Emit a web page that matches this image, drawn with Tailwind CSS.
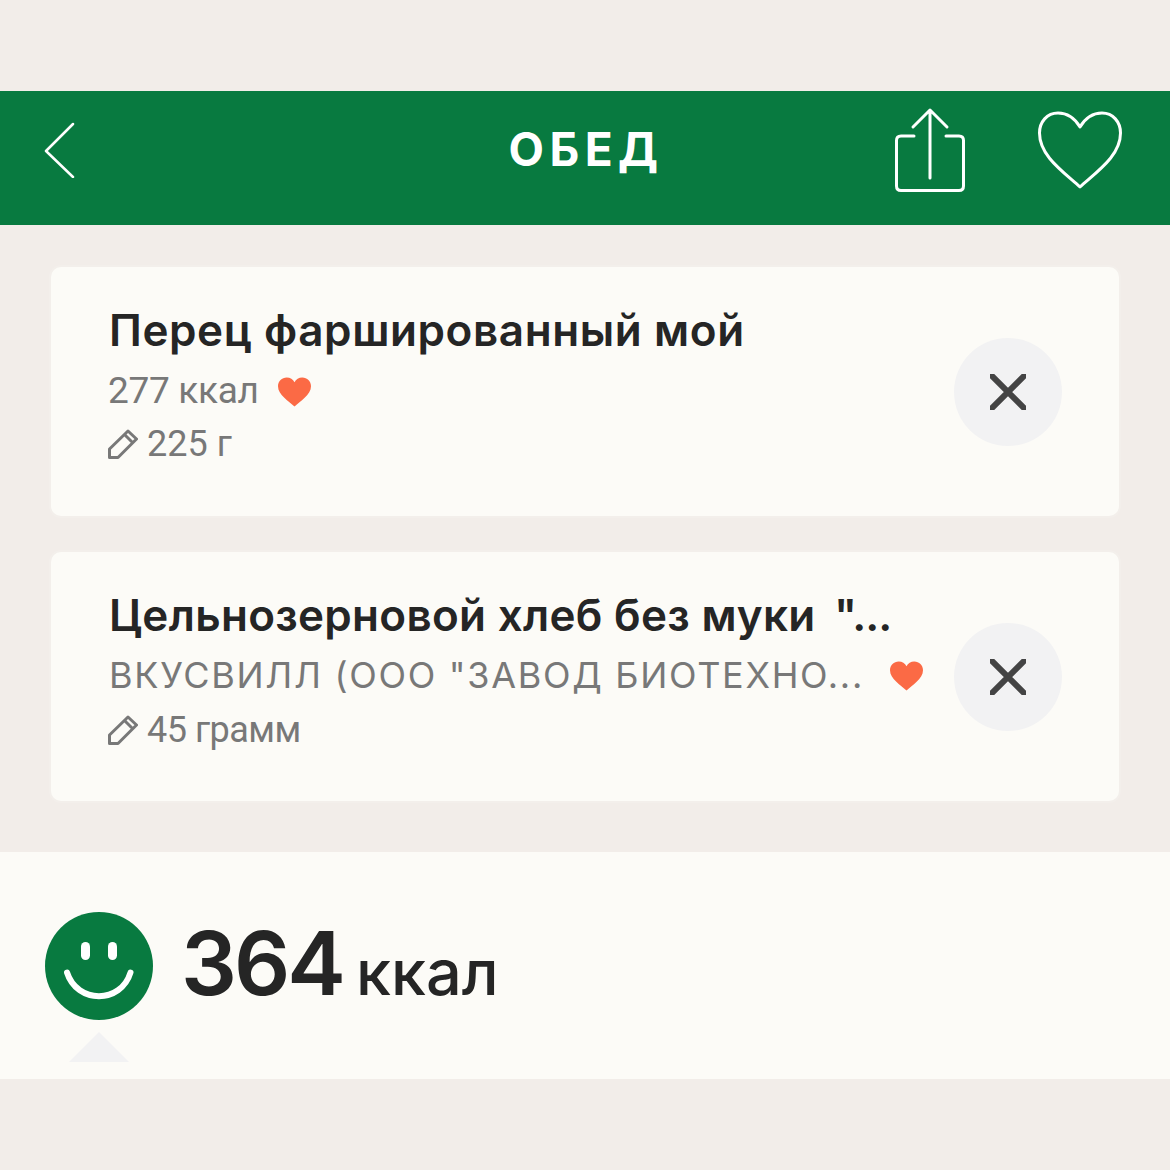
<!DOCTYPE html>
<html lang="ru">
<head>
    <meta charset="UTF-8">
    <meta name="viewport" content="width=device-width, initial-scale=1.0">
    <title>Обед</title>
    <script src="https://cdn.jsdelivr.net/npm/@tailwindcss/browser@4"></script>
</head>
<body class="bg-[#f2ede9] font-['Inter',sans-serif]">
    <div class="h-[1170px] w-[1170px] overflow-hidden pt-[91px]">
        <!-- Header -->
        <header class="relative flex h-[134px] items-center bg-[#087a40] text-white">
            <svg class="absolute left-[44px] top-[31px] h-[56px] w-[32px]" viewBox="0 0 32 56" fill="none" stroke="white" stroke-width="2.5" stroke-linecap="round" stroke-linejoin="round">
                <path d="M29 2 L2 29 L29 55"/>
            </svg>
            <h1 class="w-full pb-[18px] pl-[2px] text-center text-[46px] leading-none font-bold tracking-[5.5px]">ОБЕД</h1>
            <svg class="absolute left-[894px] top-[16px] h-[86px] w-[72px]" viewBox="0 0 72 86" fill="none" stroke="white" stroke-width="3" stroke-linecap="round" stroke-linejoin="round">
                <path d="M36 3 V71 M19 20 L36 3 L53 20"/>
                <path d="M20 29 H7 Q2.500 29 2.500 33.500 V79 Q2.500 83.500 7 83.500 H65 Q69.500 83.500 69.500 79 V33.500 Q69.500 29 65 29 H52"/>
            </svg>
            <svg class="absolute left-[1037px] top-[19px] h-[80px] w-[86px]" viewBox="0 0 86 80" fill="none" stroke="white" stroke-width="3">
                <path d="M43 17 C37 7 29 3 21 3 C10 3 2.500 12 2.500 23 C2.500 45 24 60 43 77 C62 60 83.500 45 83.500 23 C83.500 12 76 3 65 3 C57 3 49 7 43 17 Z" stroke-linejoin="round"/>
            </svg>
        </header>

        <!-- Items -->
        <div class="flex flex-col gap-[36px] px-[51px] pt-[42px]">
            <div class="flex h-[249px] items-center justify-between rounded-[10px] bg-[#fcfbf7] pr-[57px] pl-[58px] shadow-[0_0_0_2px_rgba(255,255,255,0.12)]">
                <div class="flex h-full flex-col pt-[34px]">
                    <div class="text-[44px] leading-[58px] font-semibold tracking-[0.6px] whitespace-nowrap text-[#252525]">Перец фаршированный мой</div>
                    <div class="mt-[4px] flex h-[56px] items-center font-['Roboto',sans-serif] text-[37px] tracking-[-0.3px] text-[#787878]">
                        <span class="-ml-[1px]">277 ккал</span>
                        <svg class="mt-[1px] ml-[19px] h-[30px] w-[33px]" viewBox="0 0 34 30" fill="#fb6a45">
                            <path d="M17 30 C11 24 0 18 0 9 C0 4 4 0 9 0 C12.500 0 15.500 2 17 5 C18.500 2 21.500 0 25 0 C30 0 34 4 34 9 C34 18 23 24 17 30 Z"/>
                        </svg>
                    </div>
                    <div class="mt-[2px] flex h-[46px] items-center font-['Roboto',sans-serif] text-[36px] text-[#787878]">
                        <svg class="mr-[9px] -ml-[1px] h-[30px] w-[30px]" viewBox="0 0 30 30" fill="none" stroke="#787878" stroke-width="3" stroke-linejoin="round">
                            <path d="M1.500 28.500 V20 L20 2 L28.500 10 L10 28.500 Z M16.500 5.500 L25 14"/>
                        </svg>
                        225 г
                    </div>
                </div>
                <div class="flex h-[108px] w-[108px] shrink-0 items-center justify-center rounded-full bg-[#f2f2f3]">
                    <svg class="h-[36px] w-[36px]" viewBox="0 0 36 36" fill="none" stroke="#444444" stroke-width="6">
                        <path d="M-2 -2 L38 38 M38 -2 L-2 38"/>
                    </svg>
                </div>
            </div>

            <div class="flex h-[249px] items-center justify-between rounded-[10px] bg-[#fcfbf7] pr-[57px] pl-[58px] shadow-[0_0_0_2px_rgba(255,255,255,0.12)]">
                <div class="flex h-full flex-col pt-[34px]">
                    <div class="text-[44px] leading-[58px] font-semibold tracking-[0.3px] whitespace-nowrap text-[#252525]">Цельнозерновой хлеб без муки <span class="ml-[7px] tracking-[-1px]">"...</span></div>
                    <div class="mt-[3px] flex h-[56px] items-center text-[36px] tracking-[1.7px] whitespace-nowrap text-[#787878]">
                        ВКУСВИЛЛ (ООО "ЗАВОД БИОТЕХНО...
                        <svg class="mt-[2px] ml-[26px] h-[30px] w-[33px]" viewBox="0 0 34 30" fill="#fb6a45">
                            <path d="M17 30 C11 24 0 18 0 9 C0 4 4 0 9 0 C12.500 0 15.500 2 17 5 C18.500 2 21.500 0 25 0 C30 0 34 4 34 9 C34 18 23 24 17 30 Z"/>
                        </svg>
                    </div>
                    <div class="mt-[4px] flex h-[46px] items-center font-['Roboto',sans-serif] text-[36px] tracking-[-0.5px] text-[#787878]">
                        <svg class="mr-[9px] -ml-[1px] h-[30px] w-[30px]" viewBox="0 0 30 30" fill="none" stroke="#787878" stroke-width="3" stroke-linejoin="round">
                            <path d="M1.500 28.500 V20 L20 2 L28.500 10 L10 28.500 Z M16.500 5.500 L25 14"/>
                        </svg>
                        45 грамм
                    </div>
                </div>
                <div class="flex h-[108px] w-[108px] shrink-0 items-center justify-center rounded-full bg-[#f2f2f3]">
                    <svg class="h-[36px] w-[36px]" viewBox="0 0 36 36" fill="none" stroke="#444444" stroke-width="6">
                        <path d="M-2 -2 L38 38 M38 -2 L-2 38"/>
                    </svg>
                </div>
            </div>
        </div>

        <!-- Total -->
        <div class="relative mt-[51px] flex h-[227px] items-start bg-[#fcfbf7] pt-[60px] pl-[45px]">
            <svg class="h-[108px] w-[108px]" viewBox="0 0 108 108">
                <circle cx="54" cy="54" r="54" fill="#087a40"/>
                <rect x="36" y="30" width="9" height="18" rx="4.500" fill="white"/>
                <rect x="63" y="30" width="9" height="18" rx="4.500" fill="white"/>
                <path d="M22 60.500 C32 92 76 92 85.500 60.500" fill="none" stroke="white" stroke-width="6" stroke-linecap="round"/>
            </svg>
            <div class="mt-[7px] ml-[28px] flex items-baseline leading-none text-[#252525]">
                <span class="text-[88px] font-semibold tracking-[-3px]">364</span>
                <span class="ml-[13px] text-[63px] font-medium">ккал</span>
            </div>
            <svg class="absolute left-[69px] top-[180px] h-[30px] w-[60px]" viewBox="0 0 60 30" fill="#f2f2f3">
                <path d="M30 0 L60 30 H0 Z"/>
            </svg>
        </div>
    </div>
</body>
</html>
